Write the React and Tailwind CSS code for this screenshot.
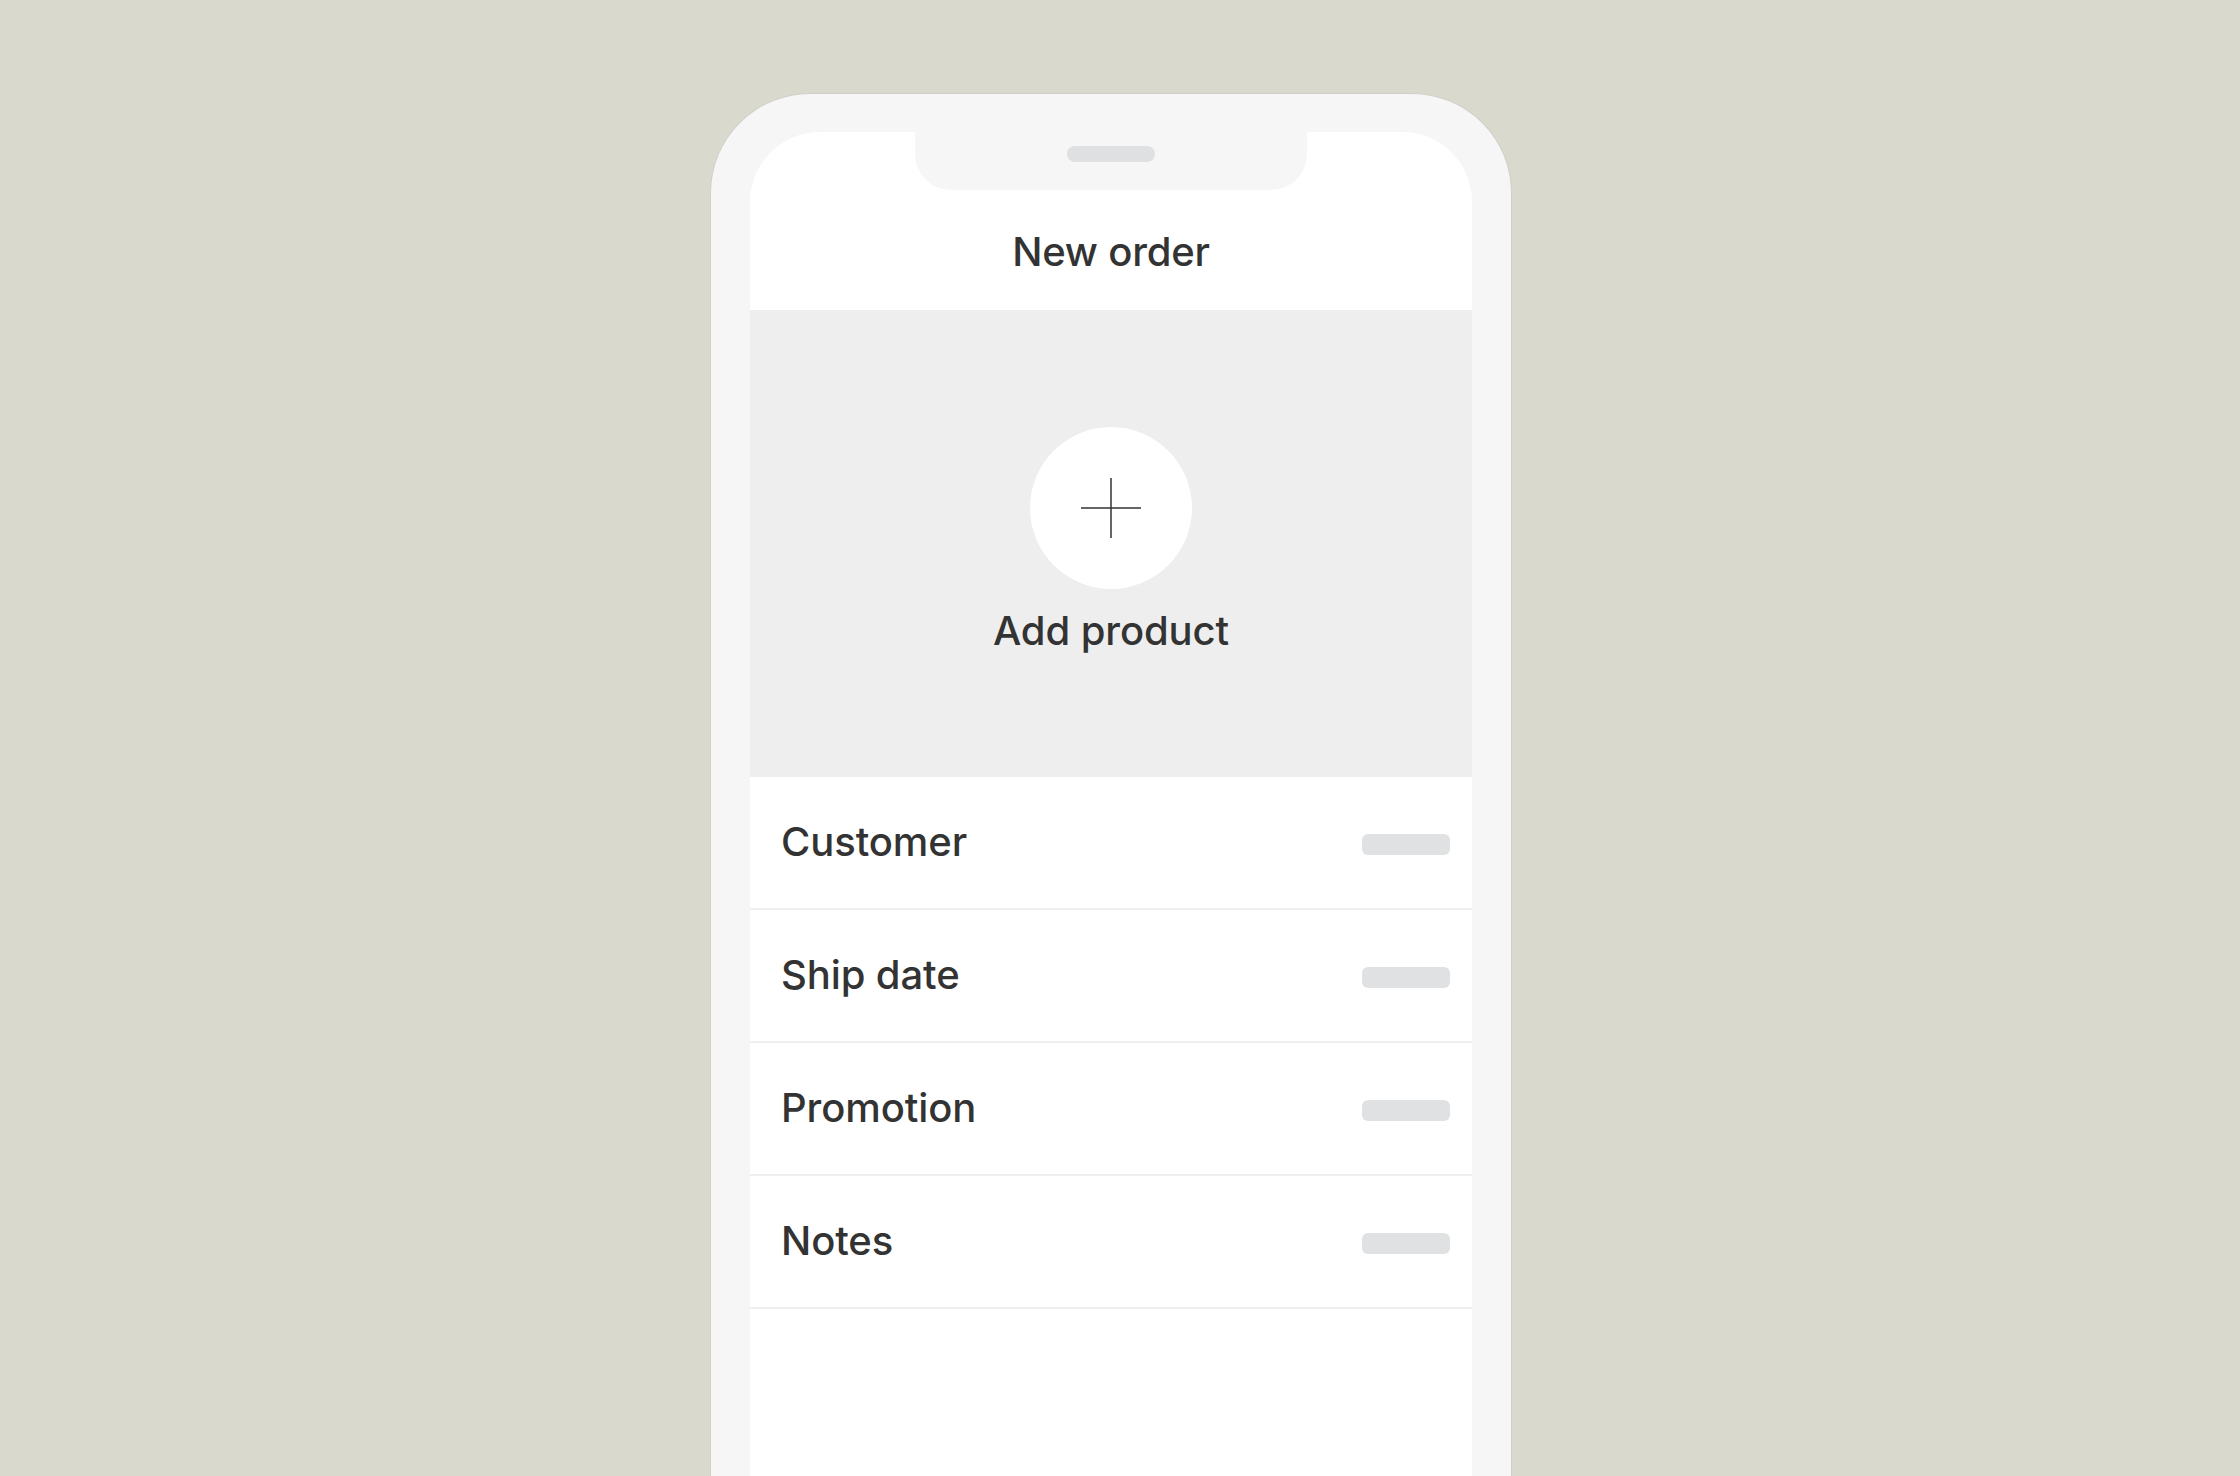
import React from "react";

const rows = ["Customer", "Ship date", "Promotion", "Notes"];

export default function App() {
  return (
    <div
      className="w-[2240px] h-[1476px] overflow-hidden bg-[#d9d9ce] flex items-start pt-[93px] pl-[710px]"
      style={{ fontFamily: "Inter, 'Noto Sans', sans-serif" }}
    >
      <div className="w-[802px] h-[1400px] shrink-0 bg-[#f6f6f6] rounded-t-[100px] border border-[#d0d0c8] border-b-0 pt-[38px] px-[39px]">
        <div className="h-full bg-white rounded-t-[70px] flex flex-col text-[#333333]">
          <header className="h-[178px] flex flex-col items-center">
            <div className="w-[392px] h-[58px] bg-[#f6f6f6] rounded-b-[36px] flex justify-center pt-[14px]">
              <div className="w-[88px] h-[16px] rounded-full bg-[#dfe0e1]" />
            </div>
            <h1 className="mt-[38px] text-[40px] leading-[48px] font-medium tracking-[-0.2px]">
              New order
            </h1>
          </header>

          <section className="h-[467px] bg-[#eeeeee] flex flex-col items-center pt-[117px]">
            <button className="w-[162px] h-[162px] rounded-full bg-white flex items-center justify-center">
              <svg width="60" height="60" viewBox="0 0 60 60">
                <line x1="30" y1="0" x2="30" y2="60" stroke="#333" strokeWidth="1.5" />
                <line x1="0" y1="30" x2="60" y2="30" stroke="#333" strokeWidth="1.5" />
              </svg>
            </button>
            <div className="mt-[18px] text-[40px] leading-[48px] font-medium tracking-[-0.1px]">
              Add product
            </div>
          </section>

          <div className="flex flex-col">
            {rows.map((r) => (
              <div
                key={r}
                className="h-[133px] border-b-2 border-[#efefef] flex items-center justify-between pl-[31px] pr-[22px]"
              >
                <span className="mb-[2px] text-[40px] leading-[48px] font-medium tracking-[-0.1px]">{r}</span>
                <span className="w-[88px] h-[21px] rounded-[6px] bg-[#e0e1e3] mt-[4px]" />
              </div>
            ))}
          </div>
        </div>
      </div>
    </div>
  );
}
